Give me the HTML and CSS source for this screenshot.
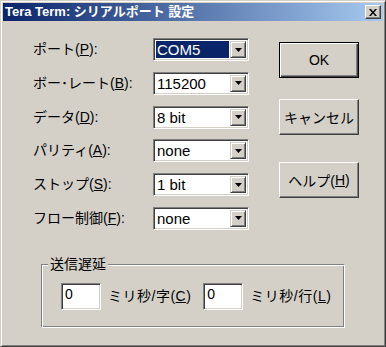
FILE: index.html
```html
<!DOCTYPE html>
<html lang="ja">
<head>
<meta charset="utf-8">
<title>Tera Term: シリアルポート 設定</title>
<link rel="stylesheet" href="styles.css">
</head>
<body>
<div class="win">
  <div class="title">
    <span class="title-text">Tera Term: シリアルポート 設定</span>
    <div class="close"><svg width="8" height="7" viewBox="0 0 8 7"><path d="M0 0h2l2 2.5L6 0h2L5 3.5 8 7H6L4 4.5 2 7H0l3-3.5z" fill="#000"/></svg></div>
  </div>
  <div class="content">
    <div class="top">
      <div class="form">
        <span class="label">ポート(<u>P</u>):</span>
        <div class="combo"><span class="val sel">COM5</span><span class="drop"><svg width="7" height="4" viewBox="0 0 7 4"><path d="M0 0h7L3.5 4z" fill="#000"/></svg></span></div>
        <span class="label">ボー･レート(<u>B</u>):</span>
        <div class="combo"><span class="val">115200</span><span class="drop"><svg width="7" height="4" viewBox="0 0 7 4"><path d="M0 0h7L3.5 4z" fill="#000"/></svg></span></div>
        <span class="label">データ(<u>D</u>):</span>
        <div class="combo"><span class="val">8 bit</span><span class="drop"><svg width="7" height="4" viewBox="0 0 7 4"><path d="M0 0h7L3.5 4z" fill="#000"/></svg></span></div>
        <span class="label">パリティ(<u>A</u>):</span>
        <div class="combo"><span class="val">none</span><span class="drop"><svg width="7" height="4" viewBox="0 0 7 4"><path d="M0 0h7L3.5 4z" fill="#000"/></svg></span></div>
        <span class="label">ストップ(<u>S</u>):</span>
        <div class="combo"><span class="val">1 bit</span><span class="drop"><svg width="7" height="4" viewBox="0 0 7 4"><path d="M0 0h7L3.5 4z" fill="#000"/></svg></span></div>
        <span class="label">フロー制御(<u>F</u>):</span>
        <div class="combo"><span class="val">none</span><span class="drop"><svg width="7" height="4" viewBox="0 0 7 4"><path d="M0 0h7L3.5 4z" fill="#000"/></svg></span></div>
      </div>
      <div class="buttons">
        <div class="btn default">OK</div>
        <div class="btn cancel">キャンセル</div>
        <div class="btn help">ヘルプ(<u>H</u>)</div>
      </div>
    </div>
    <div class="group">
      <span class="legend">送信遅延</span>
      <div class="input">0</div><span class="unit first">ミリ秒/字(<u>C</u>)</span>
      <div class="input">0</div><span class="unit">ミリ秒/行(<u>L</u>)</span>
    </div>
  </div>
</div>
</body>
</html>
```
FILE: styles.css
```css
html, body {
  margin: 0;
  padding: 0;
  background: #d4d0c8;
}
body {
  width: 386px;
  height: 347px;
  overflow: hidden;
  font-family: "Liberation Sans", "Noto Sans CJK JP", sans-serif;
  font-size: 14px;
  color: #000;
}
u { text-decoration: underline; text-underline-offset: 1px; }
.win {
  box-sizing: border-box;
  width: 386px;
  height: 347px;
  background: #d4d0c8;
  border: 1px solid;
  border-color: #d4d0c8 #404040 #404040 #d4d0c8;
  box-shadow: inset 1px 1px #fff, inset -1px -1px #808080;
  padding: 2px;
}
.title {
  height: 18px;
  background: linear-gradient(to right, #0a246a, #a6caf0);
  display: flex;
  align-items: center;
  justify-content: space-between;
  padding: 0 2px;
}
.title-text {
  color: #fff;
  font-weight: bold;
  font-size: 13px;
  line-height: 18px;
}
.close {
  box-sizing: border-box;
  width: 16px;
  height: 14px;
  background: #d4d0c8;
  border: 1px solid;
  border-color: #fff #404040 #404040 #fff;
  box-shadow: inset -1px -1px #808080;
  display: flex;
  align-items: center;
  justify-content: center;
}
.top { display: flex; }
.form {
  display: grid;
  grid-template-columns: 120px 96px;
  grid-auto-rows: 23px;
  row-gap: 10.8px;
  padding: 17px 0 0 30px;
  align-items: center;
}
.label { white-space: nowrap; line-height: 23px; }
.combo {
  box-sizing: border-box;
  height: 23px;
  border: 1px solid;
  border-color: #808080 #fff #fff #808080;
  box-shadow: inset 1px 1px #404040, inset -1px -1px #d4d0c8;
  background: #fff;
  display: flex;
  padding: 2px;
}
.val {
  flex: 1;
  padding-left: 1px;
  line-height: 17px;
  font-size: 15px;
  white-space: nowrap;
}
.sel {
  background: #0a246a;
  color: #fff;
  margin-right: 1px;
}
.drop {
  box-sizing: border-box;
  width: 16px;
  border: 1px solid;
  border-color: #d4d0c8 #404040 #404040 #d4d0c8;
  box-shadow: inset 1px 1px #fff, inset -1px -1px #808080;
  background: #d4d0c8;
  display: flex;
  align-items: center;
  justify-content: center;
}
.buttons {
  margin-left: 30px;
  padding-top: 21px;
  display: flex;
  flex-direction: column;
}
.btn {
  box-sizing: border-box;
  width: 80px;
  height: 36px;
  border: 1px solid;
  border-color: #fff #404040 #404040 #fff;
  box-shadow: inset -1px -1px #808080;
  display: flex;
  align-items: center;
  justify-content: center;
  white-space: nowrap;
}
.btn.default {
  border: 1px solid #000;
  box-shadow: inset 1px 1px #fff, inset -1px -1px #404040, inset -2px -2px #808080;
}
.cancel { margin-top: 21px; }
.help { margin-top: 27px; }
.group {
  position: relative;
  box-sizing: border-box;
  margin: 34px 0 0 38px;
  width: 304px;
  height: 64px;
  border: 1px solid;
  border-color: #808080 #fff #fff #808080;
  box-shadow: inset 1px 1px #fff, inset -1px -1px #808080;
  display: flex;
  align-items: flex-start;
  padding: 18px 0 0 19px;
}
.legend {
  position: absolute;
  top: -10px;
  left: 6px;
  padding: 0 2px;
  background: #d4d0c8;
  line-height: 19px;
}
.input {
  box-sizing: border-box;
  width: 40px;
  height: 27px;
  border: 1px solid;
  border-color: #808080 #fff #fff #808080;
  box-shadow: inset 1px 1px #404040, inset -1px -1px #d4d0c8;
  background: #fff;
  padding: 2px 3px;
  line-height: 17px;
}
.unit {
  margin: 0 0 0 7px;
  line-height: 27px;
  letter-spacing: 0.5px;
  white-space: nowrap;
}
.unit.first { margin-right: 12px; }
```
